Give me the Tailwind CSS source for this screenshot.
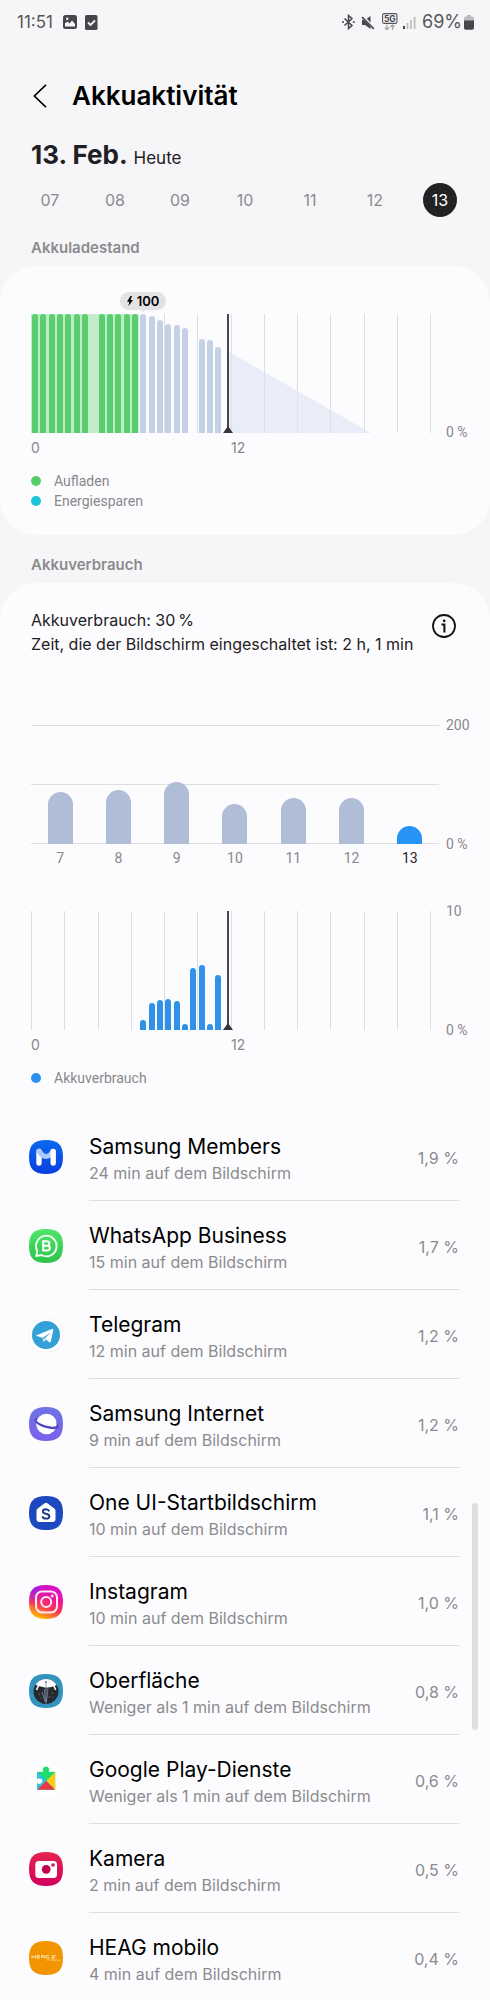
<!DOCTYPE html>
<html lang="de">
<head>
<meta charset="utf-8">
<meta name="viewport" content="width=device-width, initial-scale=1">
<title>Akkuaktivität</title>
<script src="https://cdn.jsdelivr.net/npm/@tailwindcss/browser@4"></script>
</head>
<body class="bg-[#f6f6f8] font-['Inter','Roboto',sans-serif] text-[#1f2023]">
<div class="relative overflow-hidden">

  <!-- Status bar -->
  <div class="flex h-11 items-center justify-between pl-[17px] pr-[16px] text-[#56565a]">
    <div class="flex items-center gap-2">
      <span class="w-[38px] text-[17px] leading-5">11:51</span>
      <svg class="h-[14px] w-[14px]" viewBox="0 0 14 14"><rect width="14" height="14" rx="2.5" fill="#47474b"/><path d="M2 11.5v-3l2.5-2 2 2 2.5-3 3 3.500v2.500z" fill="#f6f6f8"/><circle cx="4.200" cy="3.700" r="1.200" fill="#f6f6f8"/></svg>
      <svg class="h-[15px] w-[13px]" viewBox="0 0 13 15"><rect width="12.500" height="15" rx="1.500" fill="#47474b"/><path d="M3 7.500l2.500 2.500 4.500-4.500" fill="none" stroke="#f6f6f8" stroke-width="1.800"/></svg>
    </div>
    <div class="flex items-center">
      <svg class="h-4 w-[13px]" viewBox="0 0 13 16" fill="none" stroke="#47474b" stroke-width="1.500"><path d="M2.500 4.500l7.500 7-3.500 3v-13l3.500 3-7.500 7"/><path d="M0 8h2M10.800 8h2"/></svg>
      <svg class="ml-[6px] h-[15px] w-[14px]" viewBox="0 0 14 15"><path d="M1 5h3l5.500-4v13L4 10H1z" fill="#47474b"/><path d="M1.200 1l12 12.500" stroke="#f6f6f8" stroke-width="3"/><path d="M1 2.200l11.800 11.600" stroke="#47474b" stroke-width="1.700"/></svg>
      <svg class="ml-[7px] h-[18px] w-4" viewBox="0 0 16 18"><rect x=".6" y=".6" width="14.300" height="9.800" rx="1.500" fill="none" stroke="#55555a" stroke-width="1.100"/><text x="7.800" y="8.600" text-anchor="middle" font-family="Inter, sans-serif" font-size="8.500" font-weight="700" fill="#47474b">5G</text><path d="M5 11.500v5M2.800 14.500L5 16.700l2.200-2.200M10.500 17v-5M8.300 14l2.200-2.200 2.200 2.200" fill="none" stroke="#a5a5a8" stroke-width="1.200"/></svg>
      <svg class="ml-[5px] h-[14px] w-[13px]" viewBox="0 0 13 14"><path d="M0 11h2v3H0z" fill="#47474b"/><path d="M3.700 8h1.600v6H3.700zM7.200 5h1.600v9H7.200zM10.800 2h1.600v12h-1.600z" fill="#b9b9bc"/></svg>
      <span class="ml-[6px] text-[18px] leading-5">69%</span>
      <svg class="ml-[2px] h-[15px] w-[10px]" viewBox="0 0 10 15"><path d="M3 0h4v1.500h1.500Q10 1.500 10 3v3H0V3q0-1.500 1.500-1.500H3z" fill="#bcbcc0"/><path d="M0 5.500h10V13q0 1.700-1.700 1.700H1.700Q0 14.700 0 13z" fill="#47474b"/></svg>
    </div>
  </div>

  <!-- Header -->
  <header class="mt-[26px] flex h-[52px] items-center pl-[30px]">
    <button aria-label="Zurück" class="flex h-8 w-[42px] items-center">
      <svg class="h-6 w-5" viewBox="0 0 20 24" fill="none" stroke="#000" stroke-width="1.600"><path d="M16 .8L4.300 12 16 23.200"/></svg>
    </button>
    <h1 class="text-[26px] leading-8 font-semibold text-black">Akkuaktivität</h1>
  </header>

  <div class="mt-[15px] flex h-9 items-baseline gap-[6px] px-[31px] leading-9">
    <h2 class="text-[26px] font-bold">13. Feb.</h2><span class="text-[17px]">Heute</span>
  </div>

  <nav class="mt-[10px] flex justify-between pl-[33px] pr-[33px] text-[16px] text-[#8b8b8e]">
    <button class="size-[34px] rounded-full">07</button>
    <button class="size-[34px] rounded-full">08</button>
    <button class="size-[34px] rounded-full">09</button>
    <button class="size-[34px] rounded-full">10</button>
    <button class="size-[34px] rounded-full">11</button>
    <button class="size-[34px] rounded-full">12</button>
    <button aria-current="date" class="size-[34px] rounded-full bg-[#222225] text-white">13</button>
  </nav>

  <h3 class="px-[31px] pt-[21px] pb-2 text-[15px] leading-5 font-semibold text-[#8b8b8e]">Akkuladestand</h3>

  <!-- Charge level -->
  <section class="rounded-[36px] bg-[#fcfcfe] px-[31px] pt-12 pb-6 text-[14px] leading-5 text-[#88888b]">
    <div class="flex">
      <div class="relative h-[119px] flex-1">
        <div class="hours absolute inset-0 flex justify-between"></div>
        <svg class="absolute inset-0 h-full w-full" viewBox="0 0 400 119" preserveAspectRatio="none"><path d="M198 38L340 119H198z" fill="#dae2f1" fill-opacity=".6"/></svg>
        <div class="absolute inset-y-0 left-0 w-[27.1%] bg-[#b9f0c3]"></div>
        <div class="absolute inset-y-0 left-[14.6%] w-[2.1%] bg-[#c5edcc]"></div>
        <div id="level" class="absolute inset-0 flex items-end"></div>
        <div class="absolute inset-y-0 left-[49%] w-[2px] bg-[#47474b]"></div>
        <svg class="absolute bottom-0 left-[49%] -ml-1 h-[7px] w-[10px]" viewBox="0 0 10 7"><path d="M5 0l5 7H0z" fill="#37373b"/></svg>
        <div class="absolute -top-[22px] left-[28%] flex h-[18px] w-[46px] -translate-x-1/2 items-center justify-center gap-1 rounded-full bg-[#e3e3e5] text-[13px] font-semibold text-black">
          <svg class="h-[10px] w-[6px]" viewBox="0 0 6 10"><path d="M3.500 0L0 5.700h2.300L1.500 10 6 4H3.500L5 0z"/></svg>100
          <svg class="absolute -bottom-[2px] left-[20px] h-[3px] w-[6px]" viewBox="0 0 6 3"><path d="M0 0h6L3 3z" fill="#e3e3e5"/></svg>
        </div>
      </div>
      <div class="flex w-7 items-end justify-start"><span class="-mb-[9px] ml-[15px] font-['Roboto'] whitespace-nowrap">0 %</span></div>
    </div>
    <div class="mt-[5px] flex pr-7"><span class="w-1/2">0</span><span>12</span></div>
    <ul class="mt-[13px] font-['Roboto']">
      <li class="flex items-center gap-[13px]"><span class="size-[10px] rounded-full bg-[#54cc6a]"></span>Aufladen</li>
      <li class="flex items-center gap-[13px]"><span class="size-[10px] rounded-full bg-[#1cc5dc]"></span>Energiesparen</li>
    </ul>
  </section>

  <h3 class="px-[31px] pt-5 pb-2 text-[15px] leading-5 font-semibold text-[#8b8b8e]">Akkuverbrauch</h3>

  <!-- Usage -->
  <section class="rounded-t-[36px] bg-[#fcfcfe] pt-[25px]">
    <div class="flex items-start justify-between pr-[34px] pl-[31px]">
      <p class="text-[16px] leading-6 whitespace-nowrap">Akkuverbrauch: 30&#8201;%<br>Zeit, die der Bildschirm eingeschaltet ist: 2 h, 1 min</p>
      <button aria-label="Info" class="mt-[6px]"><svg class="size-6" viewBox="0 0 24 24" fill="none" stroke="#111"><circle cx="12" cy="12" r="11" stroke-width="1.800"/><path d="M9.500 10.500h2.900v8" stroke-width="2"/><circle cx="12.200" cy="6.800" r="1.400" fill="#111" stroke="none"/></svg></button>
    </div>

    <div class="mt-[69px] px-[31px] font-['Roboto'] text-[14px] leading-5 text-[#88888b]">
      <div class="flex">
        <div class="relative h-[119px] flex-1">
          <div class="absolute inset-0 flex flex-col justify-between"><i class="h-px bg-[#dedee1]"></i><i class="h-px bg-[#dedee1]"></i><i class="h-px bg-[#dedee1]"></i></div>
          <div id="week" class="absolute inset-0 flex items-end"></div>
        </div>
        <div class="-my-[10px] flex w-5 flex-col justify-between whitespace-nowrap"><span class="ml-[7px]">200</span><span class="ml-[7px]">0 %</span></div>
      </div>
      <div class="mt-1 mr-5 grid grid-cols-7 text-center"><span>7</span><span>8</span><span>9</span><span>10</span><span>11</span><span>12</span><span class="text-[#1f2023]">13</span></div>
    </div>

    <div class="mt-[43px] px-[31px] text-[14px] leading-5 text-[#88888b]">
      <div class="flex">
        <div class="relative h-[119px] flex-1">
          <div class="hours absolute inset-0 flex justify-between"></div>
          <div id="usage" class="absolute inset-0 flex items-end"></div>
          <div class="absolute inset-y-0 left-[49%] w-[2px] bg-[#47474b]"></div>
          <svg class="absolute bottom-0 left-[49%] -ml-1 h-[7px] w-[10px]" viewBox="0 0 10 7"><path d="M5 0l5 7H0z" fill="#37373b"/></svg>
        </div>
        <div class="-my-[10px] flex w-7 flex-col justify-between font-['Roboto'] whitespace-nowrap"><span class="ml-[15px]">10</span><span class="ml-[15px]">0 %</span></div>
      </div>
      <div class="mt-[5px] flex pr-7"><span class="w-1/2">0</span><span>12</span></div>
      <div class="mt-[13px] flex items-center gap-[13px] font-['Roboto']"><span class="size-[10px] rounded-full bg-[#2b90ea]"></span>Akkuverbrauch</div>
    </div>

    <ul id="apps" class="mt-6"></ul>
  </section>

  <div class="absolute top-[1503px] right-[12px] h-[227px] w-[6px] rounded-full bg-[#dfdfe2]"></div>
</div>

<!-- Shared shapes and gradients of the app icons -->
<svg class="absolute size-0">
  <defs>
    <path id="sq" d="M17 0C29 0 34 5 34 17S29 34 17 34 0 29 0 17 5 0 17 0z"/>
    <linearGradient id="gm" x2="0" y2="1"><stop stop-color="#0a68ee"/><stop offset="1" stop-color="#0a3fe0"/></linearGradient>
    <linearGradient id="gw" x2="0" y2="1"><stop stop-color="#4ce66a"/><stop offset="1" stop-color="#2fc24b"/></linearGradient>
    <linearGradient id="gs" x2="0" y2="1"><stop stop-color="#6b74e4"/><stop offset="1" stop-color="#7a60ee"/></linearGradient>
    <linearGradient id="gk" x2="0" y2="1"><stop stop-color="#e22650"/><stop offset="1" stop-color="#d3005f"/></linearGradient>
    <linearGradient id="gi" x1=".7" y1="0" x2=".3" y2="1"><stop stop-color="#d80ad0"/><stop offset=".35" stop-color="#f0149a"/><stop offset=".65" stop-color="#fb3b50"/><stop offset="1" stop-color="#ffc400"/></linearGradient>
    <radialGradient id="gi2" cx="0" cy="0" r=".6"><stop stop-color="#6a2cff"/><stop offset="1" stop-color="#a020f0" stop-opacity="0"/></radialGradient>
    <clipPath id="co"><circle cx="17" cy="17.500" r="12.500"/></clipPath>
    <clipPath id="cz"><path d="M9.500 5.800h5.300q-1.200-1-1-2.600Q14.300.600 17 .600t3.200 2.600q.2 1.600-1 2.600h6q1 0 1 1v16q0 1-1 1H9q-1 0-1-1v-5.300q3 1 4.800-.500 1.500-2-.100-3.900-1.900-1.500-4.700-.300V7q0-1.200 1.500-1.200z"/></clipPath>
  </defs>
</svg>

<script>
const icons = {
  members: `<use href="#sq" fill="url(#gm)"/><path d="M10 23V11.500" stroke="#fff" stroke-width="5.400" stroke-linecap="round"/><path d="M10.300 11.300q3.400 5.200 6.900 5.200t6.600-5" fill="none" stroke="#a9c8fb" stroke-width="5.200" stroke-linecap="round"/><path d="M24.200 23V11.500" stroke="#fff" stroke-width="5.400" stroke-linecap="round"/>`,
  whatsapp: `<use href="#sq" fill="url(#gw)"/><path d="M7.300 27.200l1-5.200a10.300 10.300 0 1 1 4 4z" fill="none" stroke="#effff0" stroke-width="1.900" stroke-linejoin="round"/><path d="M14.200 12.300h3.500q2.600 0 2.600 2.200t-2.600 2.200h-3.500 4q2.700 0 2.700 2.400t-2.700 2.400h-4z" fill="none" stroke="#fff" stroke-width="2"/>`,
  telegram: `<use href="#sq" fill="#fff" stroke="#ededf0" stroke-width=".6"/><circle cx="17" cy="17" r="14" fill="#33a0d8"/><path d="M7.500 17.200L23 11q1.600-.500 1.300 1.200l-2.500 11.200q-.4 1.400-1.700.500l-4.500-3.300 6-6.200-8 5.300-5.900-1.700q-.9-.4-.2-.8z" fill="#fff"/><path d="M13.600 19.700l.9 4.400 2.600-2.400z" fill="#d7ebf6"/>`,
  internet: `<use href="#sq" fill="url(#gs)"/><circle cx="17.500" cy="17" r="10.300" fill="#fff"/><path d="M8.500 11.200C4 10.800 4.500 15 10.500 18.600 17 22.200 27 23.500 29.300 20.500 30.200 19 29 17 27 15.500 29 18.500 27.500 20.300 22 19.500 15 18.500 8 15.500 7.500 13z" fill="#4f48bf"/>`,
  home: `<use href="#sq" fill="#1d49c0"/><path d="M15.300 7.500q1.700-1.300 3.400 0l6.600 4.900q1.200.9 1.200 2.400v8.200q0 3-3 3h-13q-3 0-3-3v-8.200q0-1.500 1.200-2.400z" fill="#fff"/><path d="M20.300 15.300q-.8-2-3.400-2-3 .1-3 2.200 0 1.700 3 2.300 3.500.6 3.500 2.600 0 2.100-3.300 2.200-3 0-3.700-2.200" fill="none" stroke="#17398f" stroke-width="1.900"/>`,
  instagram: `<use href="#sq" fill="url(#gi)"/><use href="#sq" fill="url(#gi2)"/><rect x="7" y="6.500" width="21" height="21" rx="6" fill="none" stroke="#ffe9f4" stroke-width="2"/><circle cx="17.200" cy="17" r="5" fill="none" stroke="#ffe9f4" stroke-width="2"/><circle cx="23.300" cy="11" r="1.400" fill="#ffe9f4"/>`,
  surface: `<use href="#sq" fill="#3294be"/><g clip-path="url(#co)"><rect width="34" height="34" fill="#252a31"/><path d="M5 4h24v6.500q-5 2.500-12 3.300Q10 13 5 10z" fill="#fff"/><path d="M9.500 11.500L7.500 16M24.700 11.500l2 4.500" stroke="#fff" stroke-width="1.600"/><path d="M17 8v22M15.500 15l.8 13M19 14l-1.500 14M13 18l3 9" stroke="#8788a8" stroke-width=".8"/><g fill="#a84d48"><circle cx="10.500" cy="20" r=".8"/><circle cx="23" cy="19" r=".8"/><circle cx="20.500" cy="23" r=".8"/></g><g fill="#607d99"><circle cx="12" cy="24" r=".6"/><circle cx="24" cy="23" r=".6"/><circle cx="17" cy="8" r="1"/></g></g>`,
  play: `<use href="#sq" fill="#fefefe"/><g transform="translate(0 3)"><g clip-path="url(#cz)"><rect x="8" width="19" height="24" fill="#20dc70"/><path d="M8 5.500l9.500 9.300L8 24z" fill="#35bdea"/><path d="M8 24l9.300-9.300 9.300 9.300z" fill="#e8384c"/><path d="M26.500 6v18l-9.200-9.200z" fill="#fccb16"/></g></g>`,
  camera: `<use href="#sq" fill="url(#gk)"/><rect x="6.300" y="9" width="21.700" height="17" rx="3.500" fill="#fff"/><circle cx="17.200" cy="17.300" r="4.400" fill="#c5044f"/><circle cx="24" cy="13" r="1.800" fill="#d51a56"/>`,
  heag: `<use href="#sq" fill="#f29400"/><g fill="none" stroke="#ffe3b0" stroke-width=".9"><path d="M3 14.300v3M3 15.800h3.500M6.500 14.300v3M11 17.100H8v-2.500h3M8 15.800h2.700M12.500 17.100v-2.500h3v2.500M12.500 16h3M20 14.600h-3v2.500h2.800V16M22.500 17.100l.8-2.500h3.200l-3.300 2.500h3"/><path d="M18.500 19.900v-1.500h2v1.500M22 18.400h1.600v1.300H22zM25 18v1.700h1.600v-1.300M28 18v1.700h3v-1.300" stroke="#ffd28a" stroke-width=".6"/></g>`
};
const apps = [
  ["members", "Samsung Members", "24 min auf dem Bildschirm", "1,9 %"],
  ["whatsapp", "WhatsApp Business", "15 min auf dem Bildschirm", "1,7 %"],
  ["telegram", "Telegram", "12 min auf dem Bildschirm", "1,2 %"],
  ["internet", "Samsung Internet", "9 min auf dem Bildschirm", "1,2 %"],
  ["home", "One UI-Startbildschirm", "10 min auf dem Bildschirm", "1,1 %"],
  ["instagram", "Instagram", "10 min auf dem Bildschirm", "1,0 %"],
  ["surface", "Oberfläche", "Weniger als 1 min auf dem Bildschirm", "0,8 %"],
  ["play", "Google Play-Dienste", "Weniger als 1 min auf dem Bildschirm", "0,6 %"],
  ["camera", "Kamera", "2 min auf dem Bildschirm", "0,5 %"],
  ["heag", "HEAG mobilo", "4 min auf dem Bildschirm", "0,4 %"]
];
document.getElementById("apps").innerHTML = apps.map(([icon, name, time, share], i) => `
  <li><button class="flex w-full pl-[29px] pr-[31px] text-left">
    <svg class="mt-7 size-[34px] shrink-0" viewBox="0 0 34 34">${icons[icon]}</svg>
    <span class="ml-[26px] flex flex-1 justify-between pt-[22px] ${i < 9 ? "h-[89px] border-b border-[#dedee1]" : "h-[87px]"}">
      <span><span class="block text-[21px] leading-[26px] text-black">${name}</span><span class="block text-[16px] leading-[26px] text-[#8b8b8e]">${time}</span></span>
      <span class="pt-3 text-[16px] leading-6 text-[#8b8b8e]">${share}</span>
    </span>
  </button></li>`).join("");

document.querySelectorAll(".hours").forEach(el => el.innerHTML = '<i class="w-px bg-[#dedee1]"></i>'.repeat(13));

// 48 half-hour slots, values in percent of the axis
const slots = (id, values, color) => document.getElementById(id).innerHTML =
  Array.from({length: 48}, (_, i) => `<div class="flex h-full flex-1 items-end justify-center">${values[i] ? `<div class="w-[6px] rounded-t-full ${color(i)}" style="height:${values[i]}%"></div>` : ""}</div>`).join("");
slots("level", [100,100,100,100,100,100,100,0,100,100,100,100,100,100,98,95,92,91,88,0,79,78,72], i => i < 13 ? "bg-[#5bcd70]" : "bg-[#c4d0e4]");
slots("usage", [0,0,0,0,0,0,0,0,0,0,0,0,0,8,23,25,26,24,5,52,55,5,46], () => "bg-[#2f91e8]");
document.getElementById("week").innerHTML = [44,45,52,34,39,39,15].map((v, i) =>
  `<div class="flex h-full flex-1 items-end justify-center"><div class="w-[25px] rounded-t-full ${i === 6 ? "bg-[#2693f5]" : "bg-[#b0bdd7]"}" style="height:${v}%"></div></div>`).join("");
</script>
</body>
</html>
